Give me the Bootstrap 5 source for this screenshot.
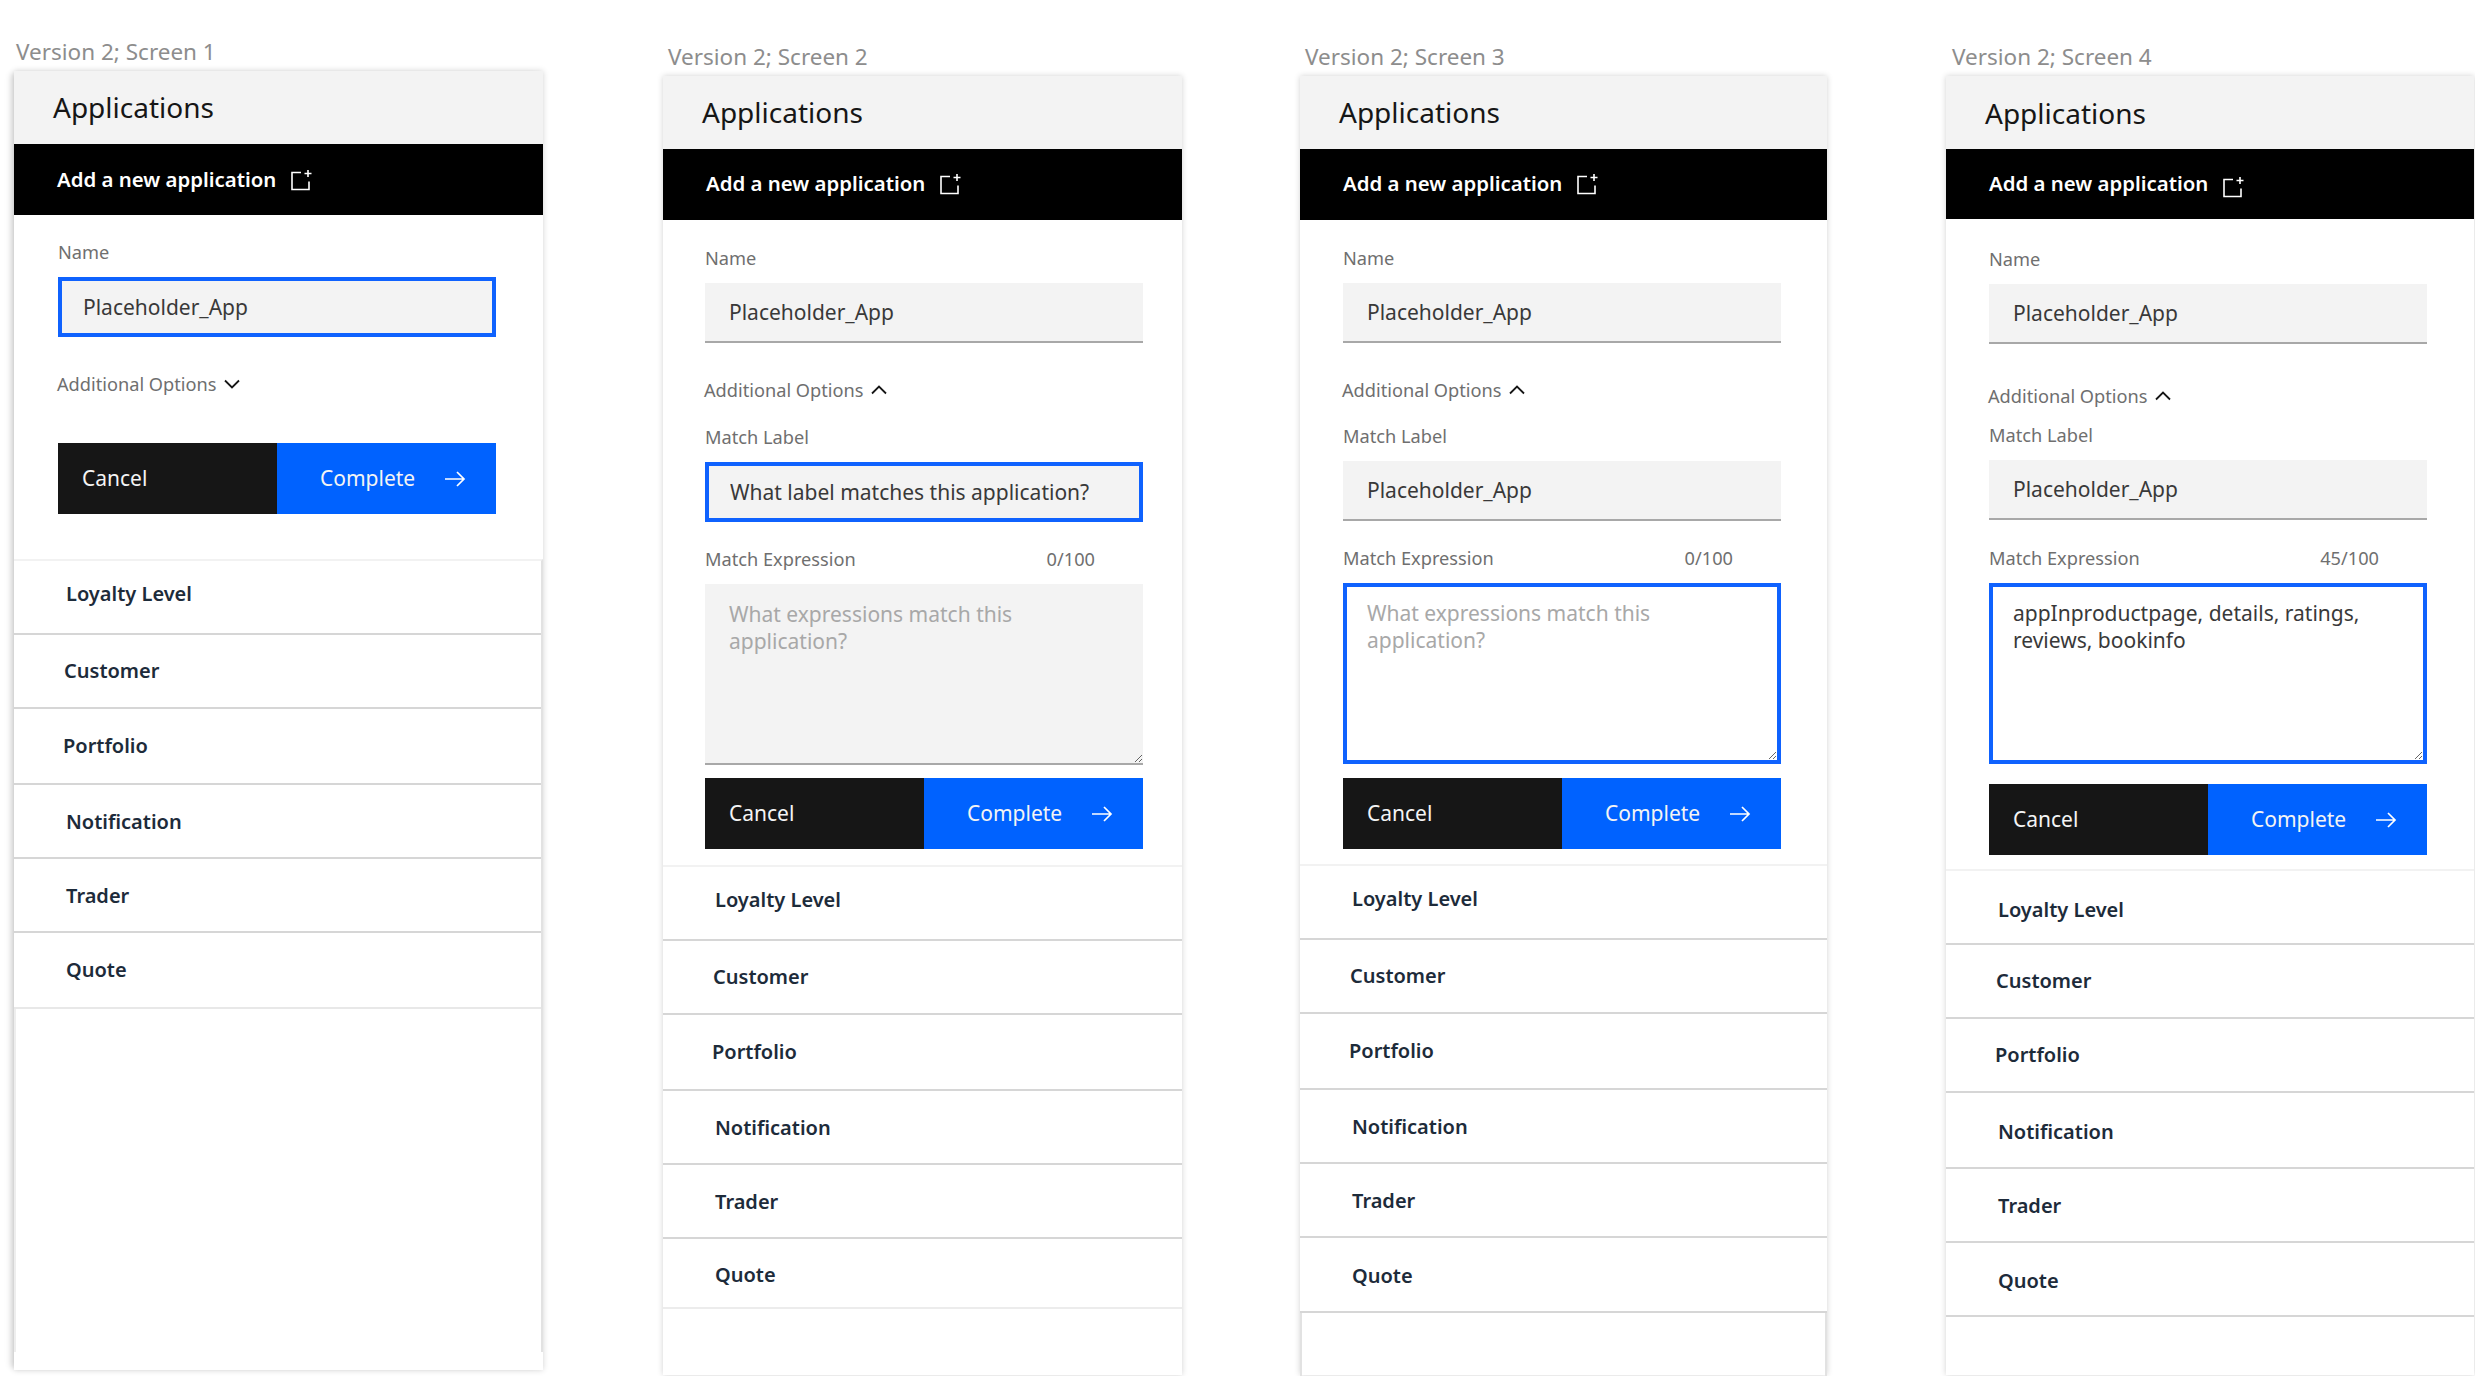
<!DOCTYPE html>
<html lang="en">
<head>
  <meta charset="UTF-8" />
  <meta name="viewport" content="width=device-width, initial-scale=1.0"/>
  <title>Applications - Version 2</title>
  <link href="https://cdn.jsdelivr.net/npm/bootstrap@5.3.3/dist/css/bootstrap.min.css" rel="stylesheet"/>
  <style>
    html, body { height: 100%; }
    body { background: #fff; overflow: hidden; font-family: "Noto Sans", "Liberation Sans", sans-serif; color: #161616; }
    .board { height: 1376px; }

    /* per screen offsets, the four wireframes don't line up exactly */
    .screen { flex: 0 0 auto; --top: 40px; --form-x: 42px; --bar: 71px; --name-gap: 25px; --add-gap: 34px; --match-gap: 21px;
      --expr-gap: 24px; --btn-gap: 13px; --list-gap: 16px; --icon-y: 0px; --bar-pad: 2px; --label-x: 5px; }
    .s1 { margin-left: 14px; width: 529px; --top: 35px; --form-x: 44px; --name-gap: 24px; --btn-gap: 46px; --list-gap: 45px; --bar-pad: 0px; --label-x: 2px; }
    .s2 { margin-left: 120px; width: 519px; }
    .s3 { margin-left: 118px; width: 527px; --form-x: 43px; --match-gap: 20px; --expr-gap: 24px; --btn-gap: 14px; }
    .s4 { margin-left: 119px; width: 528px; --form-x: 43px; --bar: 70px; --name-gap: 27px; --add-gap: 39px; --match-gap: 13px;
      --expr-gap: 25px; --btn-gap: 20px; --list-gap: 14px; --icon-y: 8px; --label-x: 6px; }

    .screen-label { margin-top: var(--top); height: 36px; line-height: 34px; font-size: 22.5px; color: #8d8d8d; padding-left: var(--label-x); white-space: nowrap; }
    .frame { background: #fff; height: 1299px; box-shadow: 0 0 6px rgba(0,0,0,.18); }
    .s1 .frame { box-shadow: -7px 0 6px -3px rgba(0,0,0,.1), 0 0 6px rgba(0,0,0,.18); }
    .frame-head { height: 73px; background: #f3f3f3; padding: 0 0 2px 39px; font-size: 28px; color: #161616; }
    .s4 .frame-head { padding-bottom: 0; }
    .add-bar { height: var(--bar); background: #000; color: #fff; padding: 0 0 var(--bar-pad) 43px; font-size: 20.4px; font-weight: 600; gap: 14px; }
    .add-bar svg { margin-top: var(--icon-y); }
    .frame-form { padding-left: var(--form-x); padding-top: var(--name-gap); width: calc(438px + var(--form-x)); }

    .field-label { height: 26px; line-height: 26px; font-size: 18.2px; color: #6f6f6f; margin-bottom: 12px; }
    .flat-input.form-control { height: 60px; border-radius: 0; border: 0; border-bottom: 2px solid #a8a8a8; background: #f3f3f3; padding: 0 24px;
      font-size: 21px; color: #393939; box-shadow: none; }
    .flat-area.form-control { height: 181px; min-height: 181px; padding: 17px 24px; line-height: 27px; }
    .flat-input.form-control::placeholder { color: #a8a8a8; opacity: 1; }
    .flat-input.is-focus.form-control { border: 4px solid #0f62fe; padding: 0 20px 0 21px; }
    .flat-area.is-focus.form-control { padding: 13px 20px; background: #fff; }
    .options-row { height: 26px; line-height: 26px; margin-top: var(--add-gap); font-size: 18.2px; color: #6f6f6f; gap: 8px; margin-left: -1px; }
    .match-block { margin-top: var(--match-gap); }
    .expr-head { margin-top: var(--expr-gap); padding-right: 48px; }

    .action-row { margin-top: var(--btn-gap); }
    .action-row .btn { height: 71px; width: 219px; border: 0; border-radius: 0; font-size: 21px; color: #f4f4f4; padding-top: 1px; }
    .action-row .btn-cancel { background: #161616; padding: 1px 24px 0; text-align: left; }
    .btn-cancel:hover { background: #161616; color: #f4f4f4; }
    .action-row .btn-go { background: #0062ff; padding: 1px 30px 0 43px; }
    .btn-go:hover { background: #0062ff; color: #f4f4f4; }

    .app-list { margin-top: var(--list-gap); border-top: 2px solid #f2f2f2; }
    .s3 .app-list { margin-top: 15px; }
    .app-list .list-group-item { height: 74px; padding: 0 0 0 52px; display: flex; align-items: center; border: 0; border-bottom: 2px solid #d6d6d6;
      font-size: 20px; font-weight: 600; color: #1d2b3a; }
    .app-list .list-group-item:last-child { border-bottom-width: 2px; }
    .app-list .list-group-item:nth-child(1) { padding-bottom: 6px; }
    .app-list .list-group-item:nth-child(2) { padding-left: 50px; }
    .app-list .list-group-item:nth-child(3) { padding-left: 49px; height: 76px; }
    .app-list .list-group-item:nth-child(4),
    .app-list .list-group-item:nth-child(5) { padding-top: 2px; }
    .s4 .app-list .list-group-item:nth-child(1) { padding: 6px 0 0 52px; }
    .s4 .app-list .list-group-item:nth-child(3) { height: 74px; }
    .s4 .app-list .list-group-item:nth-child(4) { height: 76px; padding-top: 4px; }
    .s4 .app-list .list-group-item:nth-child(6) { padding-top: 4px; }
    .s1 .app-list .list-group-item:nth-child(6) { height: 76px; border-bottom-color: #e8e8e8; }
    .s2 .app-list .list-group-item:nth-child(6) { height: 70px; padding-top: 3px; border-bottom-color: #ececec; }
    .s3 .app-list .list-group-item:nth-child(6) { height: 75px; padding-top: 2px; }
    .s1 .app-list { border-right: 2px solid #e2e2e2; }
    .tail-box { border: 2px solid #e2e2e2; border-top: 0; }
    .s1 .tail-box { height: 343px; border-bottom: 0; border-left-color: #eee; }
    .s3 .tail-box { height: 100px; }
  </style>
</head>
<body>

  <main class="board d-flex align-items-start">

    <!-- Screen 1 -->
    <section class="screen s1">
      <div class="screen-label">Version 2; Screen 1</div>
      <div class="frame">
        <div class="frame-head d-flex align-items-center">Applications</div>
        <div class="add-bar d-flex align-items-center">Add a new application
          <svg width="22" height="22" viewBox="0 0 22 22" fill="none" stroke="#fff" stroke-width="1.6"><path d="M11 3.5H2v17h17v-8"/><path d="M18 1v7M14.5 4.5h7"/></svg>
        </div>
        <form class="frame-form">
          <div class="field-label">Name</div>
          <input type="text" class="form-control flat-input is-focus" value="Placeholder_App">
          <div class="options-row d-flex align-items-center">Additional Options
            <svg width="16" height="10" viewBox="0 0 16 10" fill="none" stroke="#161616" stroke-width="1.8"><path d="M1 1.5l7 7 7-7"/></svg>
          </div>
          <div class="action-row d-flex">
            <button type="button" class="btn btn-cancel">Cancel</button>
            <button type="button" class="btn btn-go d-flex align-items-center justify-content-between">Complete
              <svg width="22" height="18" viewBox="0 0 22 18" fill="none" stroke="#fff" stroke-width="1.7"><path d="M1 9h19M13 2l7 7-7 7"/></svg>
            </button>
          </div>
        </form>
        <ul class="list-group list-group-flush rounded-0 app-list">
          <li class="list-group-item">Loyalty Level</li>
          <li class="list-group-item">Customer</li>
          <li class="list-group-item">Portfolio</li>
          <li class="list-group-item">Notification</li>
          <li class="list-group-item">Trader</li>
          <li class="list-group-item">Quote</li>
        </ul>
        <div class="tail-box"></div>
      </div>
    </section>

    <!-- Screen 2 -->
    <section class="screen s2">
      <div class="screen-label">Version 2; Screen 2</div>
      <div class="frame">
        <div class="frame-head d-flex align-items-center">Applications</div>
        <div class="add-bar d-flex align-items-center">Add a new application
          <svg width="22" height="22" viewBox="0 0 22 22" fill="none" stroke="#fff" stroke-width="1.6"><path d="M11 3.5H2v17h17v-8"/><path d="M18 1v7M14.5 4.5h7"/></svg>
        </div>
        <form class="frame-form">
          <div class="field-label">Name</div>
          <input type="text" class="form-control flat-input" value="Placeholder_App">
          <div class="options-row d-flex align-items-center">Additional Options
            <svg width="16" height="10" viewBox="0 0 16 10" fill="none" stroke="#161616" stroke-width="1.8"><path d="M1 8.5l7-7 7 7"/></svg>
          </div>
          <div class="match-block">
            <div class="field-label">Match Label</div>
            <input type="text" class="form-control flat-input is-focus" value="What label matches this application?">
          </div>
          <div class="field-label expr-head d-flex justify-content-between"><span>Match Expression</span><span>0/100</span></div>
          <textarea class="form-control flat-input flat-area" placeholder="What expressions match this application?"></textarea>
          <div class="action-row d-flex">
            <button type="button" class="btn btn-cancel">Cancel</button>
            <button type="button" class="btn btn-go d-flex align-items-center justify-content-between">Complete
              <svg width="22" height="18" viewBox="0 0 22 18" fill="none" stroke="#fff" stroke-width="1.7"><path d="M1 9h19M13 2l7 7-7 7"/></svg>
            </button>
          </div>
        </form>
        <ul class="list-group list-group-flush rounded-0 app-list">
          <li class="list-group-item">Loyalty Level</li>
          <li class="list-group-item">Customer</li>
          <li class="list-group-item">Portfolio</li>
          <li class="list-group-item">Notification</li>
          <li class="list-group-item">Trader</li>
          <li class="list-group-item">Quote</li>
        </ul>
      </div>
    </section>

    <!-- Screen 3 -->
    <section class="screen s3">
      <div class="screen-label">Version 2; Screen 3</div>
      <div class="frame">
        <div class="frame-head d-flex align-items-center">Applications</div>
        <div class="add-bar d-flex align-items-center">Add a new application
          <svg width="22" height="22" viewBox="0 0 22 22" fill="none" stroke="#fff" stroke-width="1.6"><path d="M11 3.5H2v17h17v-8"/><path d="M18 1v7M14.5 4.5h7"/></svg>
        </div>
        <form class="frame-form">
          <div class="field-label">Name</div>
          <input type="text" class="form-control flat-input" value="Placeholder_App">
          <div class="options-row d-flex align-items-center">Additional Options
            <svg width="16" height="10" viewBox="0 0 16 10" fill="none" stroke="#161616" stroke-width="1.8"><path d="M1 8.5l7-7 7 7"/></svg>
          </div>
          <div class="match-block">
            <div class="field-label">Match Label</div>
            <input type="text" class="form-control flat-input" value="Placeholder_App">
          </div>
          <div class="field-label expr-head d-flex justify-content-between"><span>Match Expression</span><span>0/100</span></div>
          <textarea class="form-control flat-input flat-area is-focus" placeholder="What expressions match this application?"></textarea>
          <div class="action-row d-flex">
            <button type="button" class="btn btn-cancel">Cancel</button>
            <button type="button" class="btn btn-go d-flex align-items-center justify-content-between">Complete
              <svg width="22" height="18" viewBox="0 0 22 18" fill="none" stroke="#fff" stroke-width="1.7"><path d="M1 9h19M13 2l7 7-7 7"/></svg>
            </button>
          </div>
        </form>
        <ul class="list-group list-group-flush rounded-0 app-list">
          <li class="list-group-item">Loyalty Level</li>
          <li class="list-group-item">Customer</li>
          <li class="list-group-item">Portfolio</li>
          <li class="list-group-item">Notification</li>
          <li class="list-group-item">Trader</li>
          <li class="list-group-item">Quote</li>
        </ul>
        <div class="tail-box"></div>
      </div>
    </section>

    <!-- Screen 4 -->
    <section class="screen s4">
      <div class="screen-label">Version 2; Screen 4</div>
      <div class="frame">
        <div class="frame-head d-flex align-items-center">Applications</div>
        <div class="add-bar d-flex align-items-center">Add a new application
          <svg width="22" height="22" viewBox="0 0 22 22" fill="none" stroke="#fff" stroke-width="1.6"><path d="M11 3.5H2v17h17v-8"/><path d="M18 1v7M14.5 4.5h7"/></svg>
        </div>
        <form class="frame-form">
          <div class="field-label">Name</div>
          <input type="text" class="form-control flat-input" value="Placeholder_App">
          <div class="options-row d-flex align-items-center">Additional Options
            <svg width="16" height="10" viewBox="0 0 16 10" fill="none" stroke="#161616" stroke-width="1.8"><path d="M1 8.5l7-7 7 7"/></svg>
          </div>
          <div class="match-block">
            <div class="field-label">Match Label</div>
            <input type="text" class="form-control flat-input" value="Placeholder_App">
          </div>
          <div class="field-label expr-head d-flex justify-content-between"><span>Match Expression</span><span>45/100</span></div>
          <textarea class="form-control flat-input flat-area is-focus">appInproductpage, details, ratings, reviews, bookinfo</textarea>
          <div class="action-row d-flex">
            <button type="button" class="btn btn-cancel">Cancel</button>
            <button type="button" class="btn btn-go d-flex align-items-center justify-content-between">Complete
              <svg width="22" height="18" viewBox="0 0 22 18" fill="none" stroke="#fff" stroke-width="1.7"><path d="M1 9h19M13 2l7 7-7 7"/></svg>
            </button>
          </div>
        </form>
        <ul class="list-group list-group-flush rounded-0 app-list">
          <li class="list-group-item">Loyalty Level</li>
          <li class="list-group-item">Customer</li>
          <li class="list-group-item">Portfolio</li>
          <li class="list-group-item">Notification</li>
          <li class="list-group-item">Trader</li>
          <li class="list-group-item">Quote</li>
        </ul>
      </div>
    </section>

  </main>

</body>
</html>
